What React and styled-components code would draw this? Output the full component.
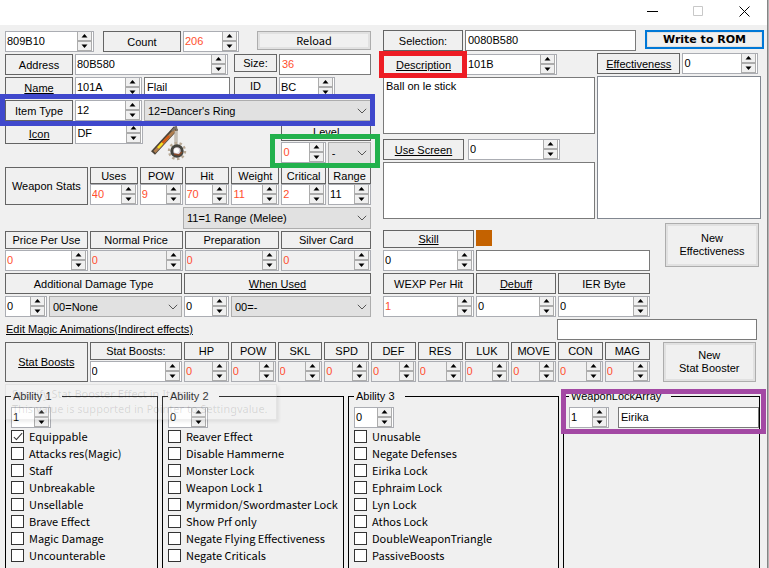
import React from "react";
import styled, { createGlobalStyle, css } from "styled-components";

const UI = `"Liberation Sans", Arial, sans-serif`;
const GOTHIC = `"Noto Sans CJK JP", sans-serif`;
const RED = "#ff4f2e";

const Global = createGlobalStyle`
  *, *::before, *::after { box-sizing: border-box; }
  body { margin: 0; background: #f0f0f0; color: #000; font: 11px/14px ${UI}; }
  button, input, select, textarea { font: inherit; color: inherit; margin: 0; border-radius: 0; outline: 0; }
  a { color: inherit; text-underline-offset: 1px; }
`;

/* flexible share of a row plus optional leading gap */
const cell = css`
  flex: ${(p) => p.$w || 1} 1 ${(p) => p.$w || 0}px;
  min-width: 0;
  margin-left: ${(p) => p.$ml || 0}px;
`;

const Window = styled.main`
  display: flex;
  flex-direction: column;
  min-height: 100vh;
  border-right: 1px solid #b4b4b4;
  overflow: hidden;
`;
const Frame = styled.div`
  flex: 1;
  display: flex;
  flex-direction: column;
  border-right: 1px solid #858585;
`;
const TitleBar = styled.header`
  display: flex;
  justify-content: flex-end;
  height: 25px;
  background: #fff;
`;
const CaptionButton = styled.button`
  width: 46px;
  height: 18px;
  padding: 0;
  border: 0;
  background: none;
  color: ${(p) => (p.disabled ? "#c8c8c8" : "#000")};
  svg { display: block; margin: 4px auto 0; }
`;
const Columns = styled.div`
  display: flex;
  padding: 5px 3px 0 5px;
`;
const Stack = styled.div`
  ${cell}
  display: flex;
  flex-direction: column;
  gap: ${(p) => p.$gap ?? 2}px;
  padding-top: ${(p) => p.$top || 0}px;
`;
const Row = styled.div`
  position: relative;
  display: flex;
  align-items: ${(p) => p.$align || "flex-start"};
  gap: 2px;
  margin-top: ${(p) => p.$mt || 0}px;
  min-height: ${(p) => p.$h || 0}px;
`;
const Space = styled.div`
  ${cell}
`;
const Slot = styled.div`
  ${cell}
  position: relative;
  display: flex;
`;
const Caption = styled.div`
  ${cell}
  ${(p) => p.$col && "flex: none;"}
  height: ${(p) => p.$h || 21}px;
  display: flex;
  align-items: center;
  justify-content: center;
  border: 1px solid #646464;
  white-space: nowrap;
`;
const SpinBox = styled.div`
  ${cell}
  ${(p) => p.$col && "flex: none;"}
  height: 21px;
  display: flex;
  border: 1px solid #abadb3;
  background: ${(p) => (p.$flat ? "#f0f0f0" : "#fff")};
  input {
    flex: 1;
    min-width: 0;
    width: 0;
    height: 17px;
    padding: 0 0 0 1px;
    border: 0;
    background: none;
    color: ${(p) => (p.$red ? RED : "#000")};
  }
`;
const Arrows = styled.div`
  display: flex;
  flex-direction: column;
  width: 15px;
  margin-right: 1px;
`;
const Arrow = styled.button`
  flex: 1;
  display: flex;
  align-items: center;
  justify-content: center;
  padding: 0;
  border: 1px solid #acacac;
  border-top-width: ${(p) => (p.$down ? 1 : 0)}px;
  background: #f0f0f0;
  svg { display: block; }
`;
const TextField = styled.input`
  ${cell}
  height: 21px;
  padding: 0 2px 1px;
  border: 1px solid #7a7a7a;
  background: #fff;
  && { color: ${(p) => (p.$red ? RED : "#000")}; }
`;
const TextBox = styled.textarea`
  display: block;
  width: 100%;
  height: 57px;
  padding: 1px 2px;
  border: 1px solid #7a7a7a;
  background: #fff;
  resize: none;
`;
const ListBox = styled.div`
  flex: 1;
  border: 1px solid #828790;
  background: #fff;
`;
const SelectWrap = styled.div`
  ${cell}
  position: relative;
  height: ${(p) => p.$h || 22}px;
  select {
    appearance: none;
    width: 100%;
    height: 100%;
    padding: 0 16px 0 3px;
    border: 1px solid #adadad;
    background: #e1e1e1;
  }
  svg { position: absolute; right: 4px; top: 8px; pointer-events: none; }
`;
const PushButton = styled.button`
  ${cell}
  height: ${(p) => p.$h || 19}px;
  padding: 0;
  border: ${(p) => (p.$primary ? "2px solid #0078d7" : "1px solid #adadad")};
  box-shadow: inset 0 0 0 ${(p) => (p.$primary ? 1 : 2)}px #e1e1e1;
  background: #f0f0f0;
  white-space: pre-line;
  && { line-height: 13px; }
  ${(p) => p.$gothic && `&& { font-family: ${GOTHIC}; }`}
  ${(p) => p.$primary && `&& { font-family: "DejaVu Sans", sans-serif; font-weight: 700; }`}
`;
const Highlight = styled.div`
  position: absolute;
  z-index: 3;
  inset: ${(p) => p.$inset};
  border: 5px solid ${(p) => p.$color};
  pointer-events: none;
`;
const Swatch = styled.div`
  width: 16px;
  height: 16px;
  background: #c46200;
`;
const LinkBar = styled.div`
  display: flex;
  height: 20px;
  margin-top: -18px;
  padding-left: 6px;
  a { height: 14px; }
`;
const StatRow = styled(Row)`
  padding: 0 11px 0 5px;
`;
const Groups = styled.section`
  position: relative;
  flex: 1;
  display: flex;
  gap: 4px;
  padding: 0 7px 0 5px;
  margin-top: 7px;
`;
const Group = styled.fieldset`
  ${cell}
  padding: 4px 0 0 5px;
  margin-right: 0;
  border: 1px solid #000;
  border-bottom: 0;
  legend {
    padding: 0 10px 0 2px;
    line-height: 14px;
  }
`;
const GroupSpin = styled.div`
  display: flex;
  width: 40px;
`;
const Check = styled.label`
  display: flex;
  align-items: center;
  height: 17px;
  gap: 5px;
  font: 11px/17px ${GOTHIC};
  white-space: nowrap;
  input {
    appearance: none;
    flex: none;
    position: relative;
    width: 13px;
    height: 13px;
    border: 1px solid #333;
    background: #fff;
  }
  input:checked::after {
    content: "";
    position: absolute;
    left: 4px;
    top: 0;
    width: 4px;
    height: 9px;
    border: solid #333;
    border-width: 0 1px 1px 0;
    transform: rotate(42deg);
  }
`;
const FadingTip = styled.div`
  position: absolute;
  z-index: 2;
  left: 5px;
  top: -5px;
  width: 272px;
  padding: 1px 6px 3px;
  border: 1px solid rgba(0, 0, 0, 0.06);
  box-shadow: 2px 2px 3px rgba(0, 0, 0, 0.07);
  background: rgba(250, 250, 250, 0.2);
  color: rgba(0, 0, 0, 0.12);
  font: 11px/15px "Noto Sans", sans-serif;
  white-space: nowrap;
  pointer-events: none;
`;

function Spin({ value, name, ...rest }) {
  return (
    <SpinBox {...rest}>
      <input aria-label={name} defaultValue={value} />
      <Arrows>
        <Arrow aria-label={`${name} up`}>
          <svg width="7" height="4"><path d="M3.5 0 6.5 3.5H.5Z" /></svg>
        </Arrow>
        <Arrow $down aria-label={`${name} down`}>
          <svg width="7" height="4"><path d="M3.5 4 .5 .5h6Z" /></svg>
        </Arrow>
      </Arrows>
    </SpinBox>
  );
}

function Drop({ value, name, ...rest }) {
  return (
    <SelectWrap {...rest}>
      <select aria-label={name}><option>{value}</option></select>
      <svg width="10" height="6" fill="none" stroke="#555"><path d="M.8 .8 5 5 9.2 .8" /></svg>
    </SelectWrap>
  );
}

function LinkCaption({ children, ...rest }) {
  return <Caption {...rest}><a href="#edit">{children}</a></Caption>;
}

function Field({ w, ml, label, link, value, h = 18, gap = 1, red, flat }) {
  const Head = link ? LinkCaption : Caption;
  return (
    <Stack $w={w} $ml={ml} $gap={gap}>
      <Head $col $h={h}>{label}</Head>
      <Spin $col name={label} value={value} $red={red} $flat={flat} />
    </Stack>
  );
}

function Flail() {
  return (
    <svg width="40" height="38" viewBox="0 0 40 38" fill="none">
      <path d="M3 28 26 3" stroke="#4b4338" strokeWidth="5.4" />
      <path d="M4.5 27 25 5" stroke="#b07f50" strokeWidth="3" />
      <path d="M8 23 19 11" stroke="#d65a12" strokeWidth="2.4" />
      <path d="m8 23 4.500-5" stroke="#f5e322" strokeWidth="2.4" />
      <path d="m22 6 4-4 1 4" stroke="#7c7365" strokeWidth="2" />
      <path d="M26 6v14" stroke="#a9a297" strokeWidth="3" />
      <path d="M26 6v14" stroke="#e0dbd4" strokeWidth="1" />
      <circle cx="27" cy="26" r="8" stroke="#b8a996" strokeWidth="2.4" strokeDasharray="2.5 2.500" />
      <circle cx="27" cy="26" r="5.200" fill="#d9cfd6" stroke="#45453f" strokeWidth="3" />
      <path d="m24 29 5 1 3-3" stroke="#8a4a2a" strokeWidth="1.500" />
      <circle cx="26.500" cy="25.500" r="2.500" fill="#fff" />
    </svg>
  );
}
const Art = styled.div`
  ${cell}
  display: flex;
  justify-content: center;
  padding-top: 2px;
`;

const weaponStats = [
  ["Uses", 48, "40"], ["POW", 43, "9"], ["Hit", 45, "70"],
  ["Weight", 48, "11"], ["Critical", 45, "2"], ["Range", 43, "11"],
];
const prices = [["Price Per Use", 83], ["Normal Price", 93], ["Preparation", 95], ["Silver Card", 90]];
const boosts = ["HP", "POW", "SKL", "SPD", "DEF", "RES", "LUK", "MOVE", "CON", "MAG"];
const abilities = [
  { title: "Ability 1", w: 153, value: "1", items: ["Equippable", "Attacks res(Magic)", "Staff", "Unbreakable", "Unsellable", "Brave Effect", "Magic Damage", "Uncounterable"] },
  { title: "Ability 2", w: 182, value: "0", items: ["Reaver Effect", "Disable Hammerne", "Monster Lock", "Weapon Lock 1", "Myrmidon/Swordmaster Lock", "Show Prf only", "Negate Flying Effectiveness", "Negate Criticals"] },
  { title: "Ability 3", w: 211, value: "0", items: ["Unusable", "Negate Defenses", "Eirika Lock", "Ephraim Lock", "Lyn Lock", "Athos Lock", "DoubleWeaponTriangle", "PassiveBoosts"] },
];

function ItemPanel() {
  return (
    <Stack $w={366} $top={1}>
      <Row $h={21}>
        <Spin $w={89} name="Start address" value="809B10" />
        <Caption $w={78} $ml={7}>Count</Caption>
        <Spin $w={56} name="Count" value="206" $red />
        <PushButton $w={114} $ml={16} $gothic>Reload</PushButton>
      </Row>
      <Row $h={21}>
        <Caption $w={68}>Address</Caption>
        <Spin $w={153} name="Address" value="80B580" />
        <Caption $w={43} $ml={4} $h={18}>Size:</Caption>
        <TextField $w={92} aria-label="Size" defaultValue="36" $red />
      </Row>
      <Row $h={21}>
        <LinkCaption $w={68}>Name</LinkCaption>
        <Spin $w={67} name="Name" value="101A" />
        <TextField $w={86} aria-label="Name text" defaultValue="Flail" />
        <Caption $w={43} $ml={2} $h={18}>ID</Caption>
        <Spin $w={56} name="ID" value="BC" />
        <Space $w={34} />
      </Row>
      <Row $h={21}>
        <Caption $w={68}>Item Type</Caption>
        <Spin $w={67} name="Item Type" value="12" />
        <Drop $w={227} $h={21} name="Item Type name" value="12=Dancer's Ring" />
        <Highlight $inset="-6px -4px -5px -5px" $color="#3f48cc" />
      </Row>
      <Row $h={42}>
        <LinkCaption $w={68}>Icon</LinkCaption>
        <Spin $w={67} name="Icon" value="DF" />
        <Art $w={50}><Flail /></Art>
        <Space $w={82} />
        <Stack $w={89} $gap={1}>
          <Caption $col $h={18}>Level</Caption>
          <Row>
            <Spin $w={44} name="Level" value="0" $red />
            <Drop $w={43} name="Level rank" value="-" />
            <Highlight $inset="-8px -9px -4px -11px" $color="#22b14c" />
          </Row>
        </Stack>
      </Row>
      <Row $align="stretch">
        <Caption $w={83} $h={38}>Weapon Stats</Caption>
        {weaponStats.map(([label, w, value]) => (
          <Field key={label} w={w} label={label} value={value} red={label !== "Range"} h={17} gap={0} />
        ))}
      </Row>
      <Row>
        <Space $w={176} />
        <Drop $w={188} name="Range name" value="11=1 Range (Melee)" />
      </Row>
      <Row>
        {prices.map(([label, w], i) => (
          <Field key={label} w={w} label={label} value="0" red flat={i > 0} />
        ))}
      </Row>
      <Row>
        <Caption $w={177}>Additional Damage Type</Caption>
        <LinkCaption $w={187}>When Used</LinkCaption>
      </Row>
      <Row>
        <Spin $w={42} name="Damage Type" value="0" />
        <Drop $w={133} $h={21} name="Damage Type name" value="00=None" />
        <Spin $w={45} name="When Used" value="0" />
        <Drop $w={140} $h={21} name="When Used name" value="00=-" />
      </Row>
    </Stack>
  );
}

function EffectPanel() {
  return (
    <Stack $w={381} $ml={12}>
      <Row $h={21}>
        <Caption $w={80}>Selection:</Caption>
        <TextField $w={171} aria-label="Selection" defaultValue="0080B580" />
        <PushButton $w={119} $ml={7} $primary>Write to ROM</PushButton>
      </Row>
      <Row $align="stretch">
        <Stack $w={212}>
          <Row $mt={1} $h={21}>
            <Slot $w={81}>
              <LinkCaption>Description</LinkCaption>
              <Highlight $inset="-3px -3px -3px -4px" $color="#ed1c24" />
            </Slot>
            <Spin $w={91} name="Description" value="101B" />
            <Space $w={36} />
          </Row>
          <TextBox aria-label="Description text" defaultValue="Ball on le stick" />
          <Row $mt={3} $h={21}>
            <LinkCaption $w={81}>Use Screen</LinkCaption>
            <Spin $w={92} $ml={2} name="Use Screen" value="0" />
            <Space $w={33} />
          </Row>
          <TextBox aria-label="Use Screen text" />
        </Stack>
        <Stack $w={164}>
          <Row $h={21}>
            <LinkCaption $w={84}>Effectiveness</LinkCaption>
            <Spin $w={76} name="Effectiveness" value="0" />
            <Space $w={1} />
          </Row>
          <ListBox role="listbox" aria-label="Effectiveness list" />
        </Stack>
        <Space $w={1} />
      </Row>
      <Row $mt={2}>
        <Stack $w={267} $top={7}>
          <Row>
            <LinkCaption $w={91} $h={18}>Skill</LinkCaption>
            <Space $w={174}><Swatch /></Space>
          </Row>
          <Row>
            <Spin $w={91} name="Skill" value="0" />
            <TextField $w={174} aria-label="Skill name" />
          </Row>
          <Row>
            <Field w={91} label="WEXP Per Hit" value="1" red h={21} gap={2} />
            <Field w={80} label="Debuff" link value="0" h={21} gap={2} />
            <Field w={92} label="IER Byte" value="0" h={21} gap={2} />
          </Row>
        </Stack>
        <PushButton $w={94} $ml={13} $h={44}>{"New\nEffectiveness"}</PushButton>
        <Space $w={3} />
      </Row>
      <Row>
        <Space $w={172} />
        <TextField $w={200} aria-label="IER name" />
        <Space $w={5} />
      </Row>
    </Stack>
  );
}

export default function App() {
  return (
    <Window>
      <Global />
      <Frame>
        <TitleBar>
          <CaptionButton aria-label="Minimize">
            <svg width="11" height="11" stroke="currentColor"><path d="M0 5.500h11" /></svg>
          </CaptionButton>
          <CaptionButton aria-label="Maximize" disabled>
            <svg width="11" height="11" fill="none" stroke="currentColor"><path d="M.5 .5h9v9h-9z" /></svg>
          </CaptionButton>
          <CaptionButton aria-label="Close">
            <svg width="11" height="11" stroke="currentColor"><path d="m.5.5 10 10m0-10-10 10" /></svg>
          </CaptionButton>
        </TitleBar>
        <Columns>
          <ItemPanel />
          <EffectPanel />
        </Columns>
        <LinkBar><a href="#animations">Edit Magic Animations(Indirect effects)</a></LinkBar>
        <StatRow>
          <LinkCaption $w={83} $h={40}>Stat Boosts</LinkCaption>
          <Field w={93} label="Stat Boosts:" value="0" h={18} />
          {boosts.map((b) => <Field key={b} w={45} label={b} value="0" red flat />)}
          <PushButton $w={94} $ml={11} $h={40}>{"New\nStat Booster"}</PushButton>
        </StatRow>
        <Groups>
          {abilities.map((g, i) => (
            <Group key={g.title} $w={g.w}>
              <legend>{g.title}</legend>
              <GroupSpin><Spin name={g.title} value={g.value} /></GroupSpin>
              {g.items.map((t, j) => (
                <Check key={t}><input type="checkbox" defaultChecked={i === 0 && j === 0} />{t}</Check>
              ))}
            </Group>
          ))}
          <Group $w={197}>
            <legend>WeaponLockArray</legend>
            <Row>
              <GroupSpin><Spin name="Weapon lock" value="1" /></GroupSpin>
              <TextField $ml={7} aria-label="Weapon lock name" defaultValue="Eirika" />
              <Highlight $inset="-18px -7px -6px -8px" $color="#a349a4" />
            </Row>
          </Group>
          <FadingTip aria-hidden="true">Specify Stat Booster Effect in Item.<br />This value is supported in Pointer to Settingvalue.</FadingTip>
        </Groups>
      </Frame>
    </Window>
  );
}
